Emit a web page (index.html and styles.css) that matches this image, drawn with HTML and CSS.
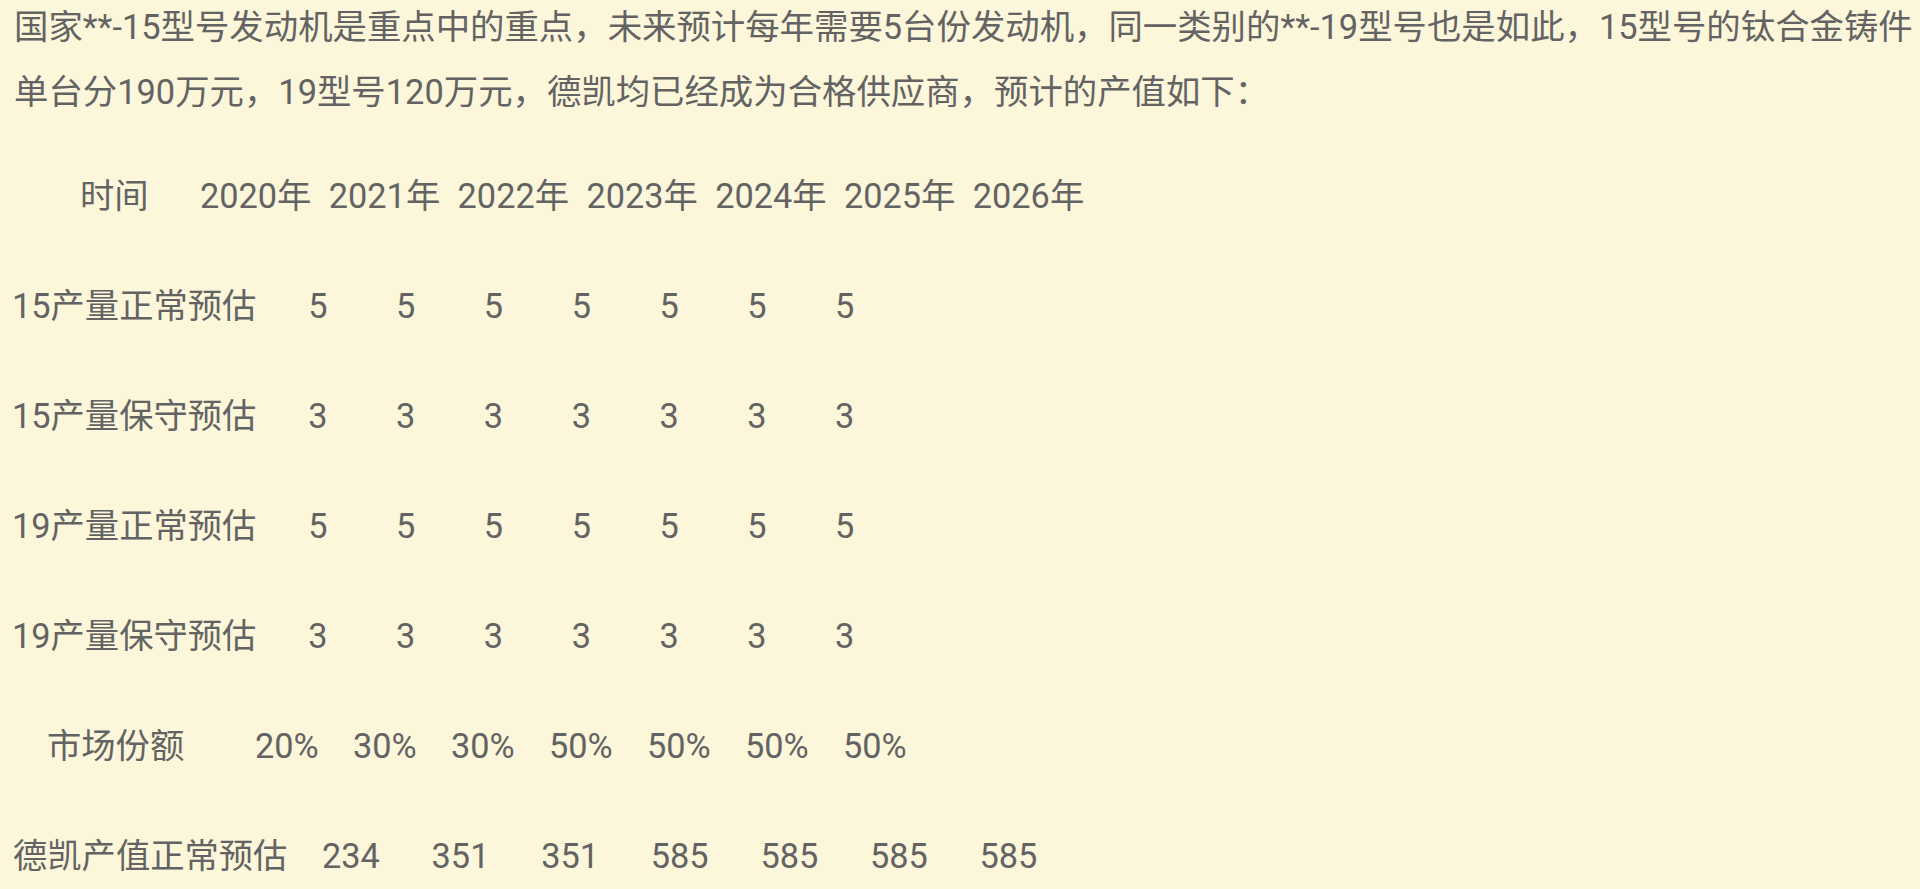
FILE: index.html
```html
<!DOCTYPE html>
<html lang="zh-CN">
<head>
<meta charset="utf-8">
<title>德凯产值预估</title>
<link rel="stylesheet" href="styles.css">
</head>
<body>
<div class="page">
  <p class="intro">国家**-15型号发动机是重点中的重点，未来预计每年需要5台份发动机，同一类别的**-19型号也是如此，15型号的钛合金铸件<br>单台分190万元，19型号120万元，德凯均已经成为合格供应商，预计的产值如下：</p>
  <div class="table">
    <div class="row row-head">
      <span class="lab">时间</span>
      <span class="cell">2020年</span><span class="cell">2021年</span><span class="cell">2022年</span><span class="cell">2023年</span><span class="cell">2024年</span><span class="cell">2025年</span><span class="cell">2026年</span>
    </div>
    <div class="row row-qty">
      <span class="lab">15产量正常预估</span>
      <span class="cell">5</span><span class="cell">5</span><span class="cell">5</span><span class="cell">5</span><span class="cell">5</span><span class="cell">5</span><span class="cell">5</span>
    </div>
    <div class="row row-qty">
      <span class="lab">15产量保守预估</span>
      <span class="cell">3</span><span class="cell">3</span><span class="cell">3</span><span class="cell">3</span><span class="cell">3</span><span class="cell">3</span><span class="cell">3</span>
    </div>
    <div class="row row-qty">
      <span class="lab">19产量正常预估</span>
      <span class="cell">5</span><span class="cell">5</span><span class="cell">5</span><span class="cell">5</span><span class="cell">5</span><span class="cell">5</span><span class="cell">5</span>
    </div>
    <div class="row row-qty">
      <span class="lab">19产量保守预估</span>
      <span class="cell">3</span><span class="cell">3</span><span class="cell">3</span><span class="cell">3</span><span class="cell">3</span><span class="cell">3</span><span class="cell">3</span>
    </div>
    <div class="row row-share">
      <span class="lab">市场份额</span>
      <span class="cell">20%</span><span class="cell">30%</span><span class="cell">30%</span><span class="cell">50%</span><span class="cell">50%</span><span class="cell">50%</span><span class="cell">50%</span>
    </div>
    <div class="row row-value">
      <span class="lab">德凯产值正常预估</span>
      <span class="cell">234</span><span class="cell">351</span><span class="cell">351</span><span class="cell">585</span><span class="cell">585</span><span class="cell">585</span><span class="cell">585</span>
    </div>
  </div>
</div>
</body>
</html>
```

FILE: styles.css
```css
html, body {
  margin: 0;
  padding: 0;
  background: #fcf6da;
}

body {
  width: 1920px;
  height: 889px;
  overflow: hidden;
  font-family: Roboto, "Noto Sans CJK SC", sans-serif;
  font-size: 34.3px;
  color: #636363;
}

.page {
  padding: 0;
}

.intro {
  margin: -5px 0 0 0;
  padding-left: 14px;
  font-size: 34.4px;
  line-height: 65px;
  white-space: nowrap;
}

.table {
  margin-top: 16px;
}

.row {
  display: flex;
  align-items: center;
  height: 110px;
  line-height: 1;
  white-space: nowrap;
}

.lab {
  flex: none;
}

.cell {
  flex: none;
}

/* header row: 时间 + years */
.row-head {
  padding-left: 80px;
}
.row-head .lab {
  width: 120px;
}
.row-head .cell {
  width: 128.8px;
}

/* quantity rows */
.row-qty {
  padding-left: 12px;
}
.row-qty .lab {
  width: 262px;
}
.row-qty .cell {
  width: 87.8px;
  text-align: center;
}

/* market share row */
.row-share {
  padding-left: 47px;
}
.row-share .lab {
  width: 208px;
}
.row-share .cell {
  width: 98px;
}

/* output value row */
.row-value {
  padding-left: 13px;
}
.row-value .lab {
  width: 309px;
}
.row-value .cell {
  width: 109.6px;
}
```
